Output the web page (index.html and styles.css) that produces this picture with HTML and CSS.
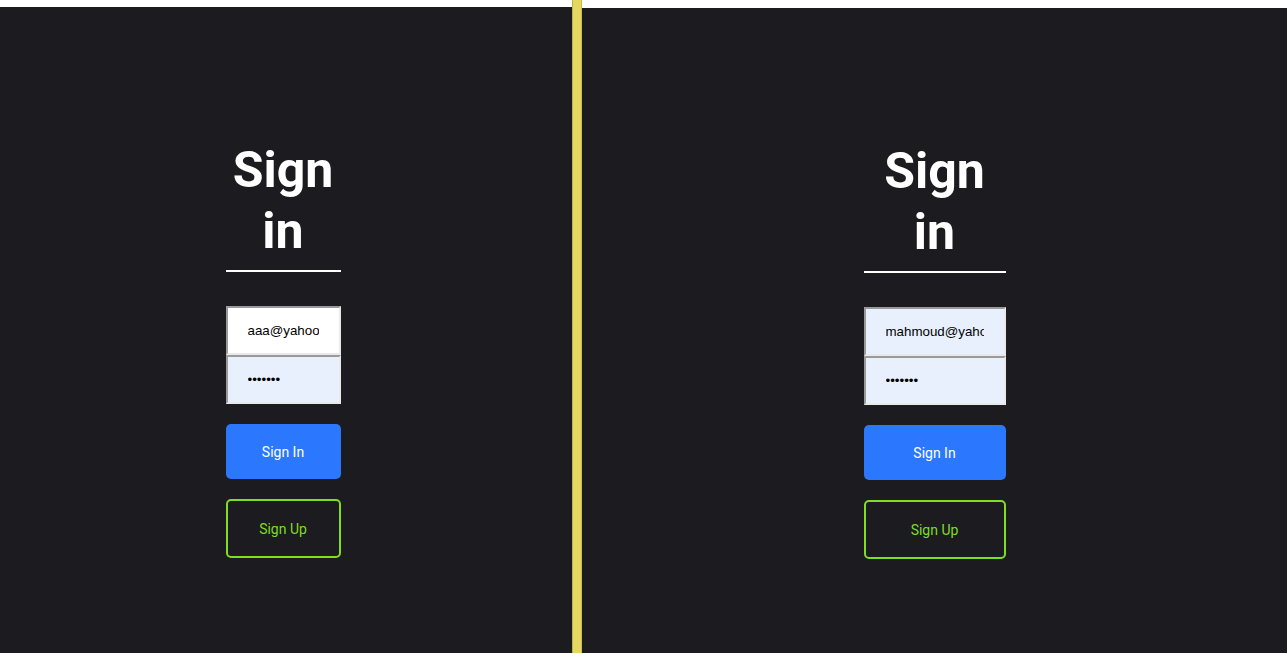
FILE: index.html
```html
<!DOCTYPE html>
<html lang="en">
<head>
<meta charset="utf-8">
<title>Sign in</title>
<link rel="stylesheet" href="styles.css">
</head>
<body>
<div class="stage">
  <section class="panel panel-left">
    <form class="form form-narrow">
      <h1 class="title">Sign in</h1>
      <div class="rule"></div>
      <div class="fields">
        <input class="field" type="text" value="aaa@yahoo">
        <input class="field autofill" type="password" value="1234567">
      </div>
      <button type="button" class="btn btn-primary">Sign In</button>
      <button type="button" class="btn btn-outline">Sign Up</button>
    </form>
  </section>
  <div class="divider"></div>
  <section class="panel panel-right">
    <form class="form form-wide">
      <h1 class="title">Sign in</h1>
      <div class="rule"></div>
      <div class="fields">
        <input class="field autofill" type="text" value="mahmoud@yahoo.com">
        <input class="field autofill" type="password" value="1234567">
      </div>
      <button type="button" class="btn btn-primary">Sign In</button>
      <button type="button" class="btn btn-outline">Sign Up</button>
    </form>
  </section>
</div>
</body>
</html>
```

FILE: styles.css
```css
html, body {
  margin: 0;
  padding: 0;
  background: #ffffff;
}

.stage {
  display: flex;
  height: 653px;
  overflow: hidden;
}

.panel {
  background: #1c1b20;
  display: flex;
  flex-direction: column;
  align-items: center;
  height: 100%;
}

.panel-left {
  width: 572px;
  margin-top: 7px;
  padding-right: 6px;
  box-sizing: border-box;
}

.panel-right {
  flex: 1;
  margin-top: 8px;
}

.divider {
  width: 8px;
  background: #e4d861;
  border-left: 1px solid #bfb14a;
  border-right: 1px solid #c9bb50;
  height: 100%;
}

.form {
  display: flex;
  flex-direction: column;
  padding-top: 133px;
}

.form-narrow { width: 115px; }
.form-wide { width: 142px; }

.title {
  margin: 0 -10px;
  font-family: Roboto, "Noto Sans", sans-serif;
  font-weight: 700;
  font-size: 50px;
  line-height: 61px;
  color: #ffffff;
  text-align: center;
}

.form-narrow .title,
.form-wide .title {
  max-width: 135px;
  align-self: center;
}

.rule {
  height: 2px;
  background: #ffffff;
  margin-top: 8px;
}

.fields {
  display: flex;
  flex-direction: column;
  margin-top: 34px;
}

.field {
  box-sizing: border-box;
  width: 100%;
  height: 49px;
  margin: 0;
  padding: 0 20px 0 20px;
  border-style: solid;
  border-width: 2px;
  border-color: #9a9a9a #e9e9e9 #e9e9e9 #9a9a9a;
  background: #ffffff;
  color: #000000;
  font-family: "Liberation Sans", Arial, sans-serif;
  font-size: 13.333px;
  outline: none;
}

.field.autofill {
  background: #e8f0fe;
}

.btn {
  box-sizing: border-box;
  width: 100%;
  margin: 20px 0 0;
  font-family: Roboto, "Noto Sans", sans-serif;
  font-size: 14px;
  font-weight: 400;
  border-radius: 5px;
  cursor: pointer;
}

.btn-primary {
  height: 55px;
  background: #2b78ff;
  color: #ffffff;
  border: none;
}

.btn-outline {
  height: 59px;
  background: transparent;
  color: #7fdd22;
  border: 2px solid #7fdd22;
}
```
